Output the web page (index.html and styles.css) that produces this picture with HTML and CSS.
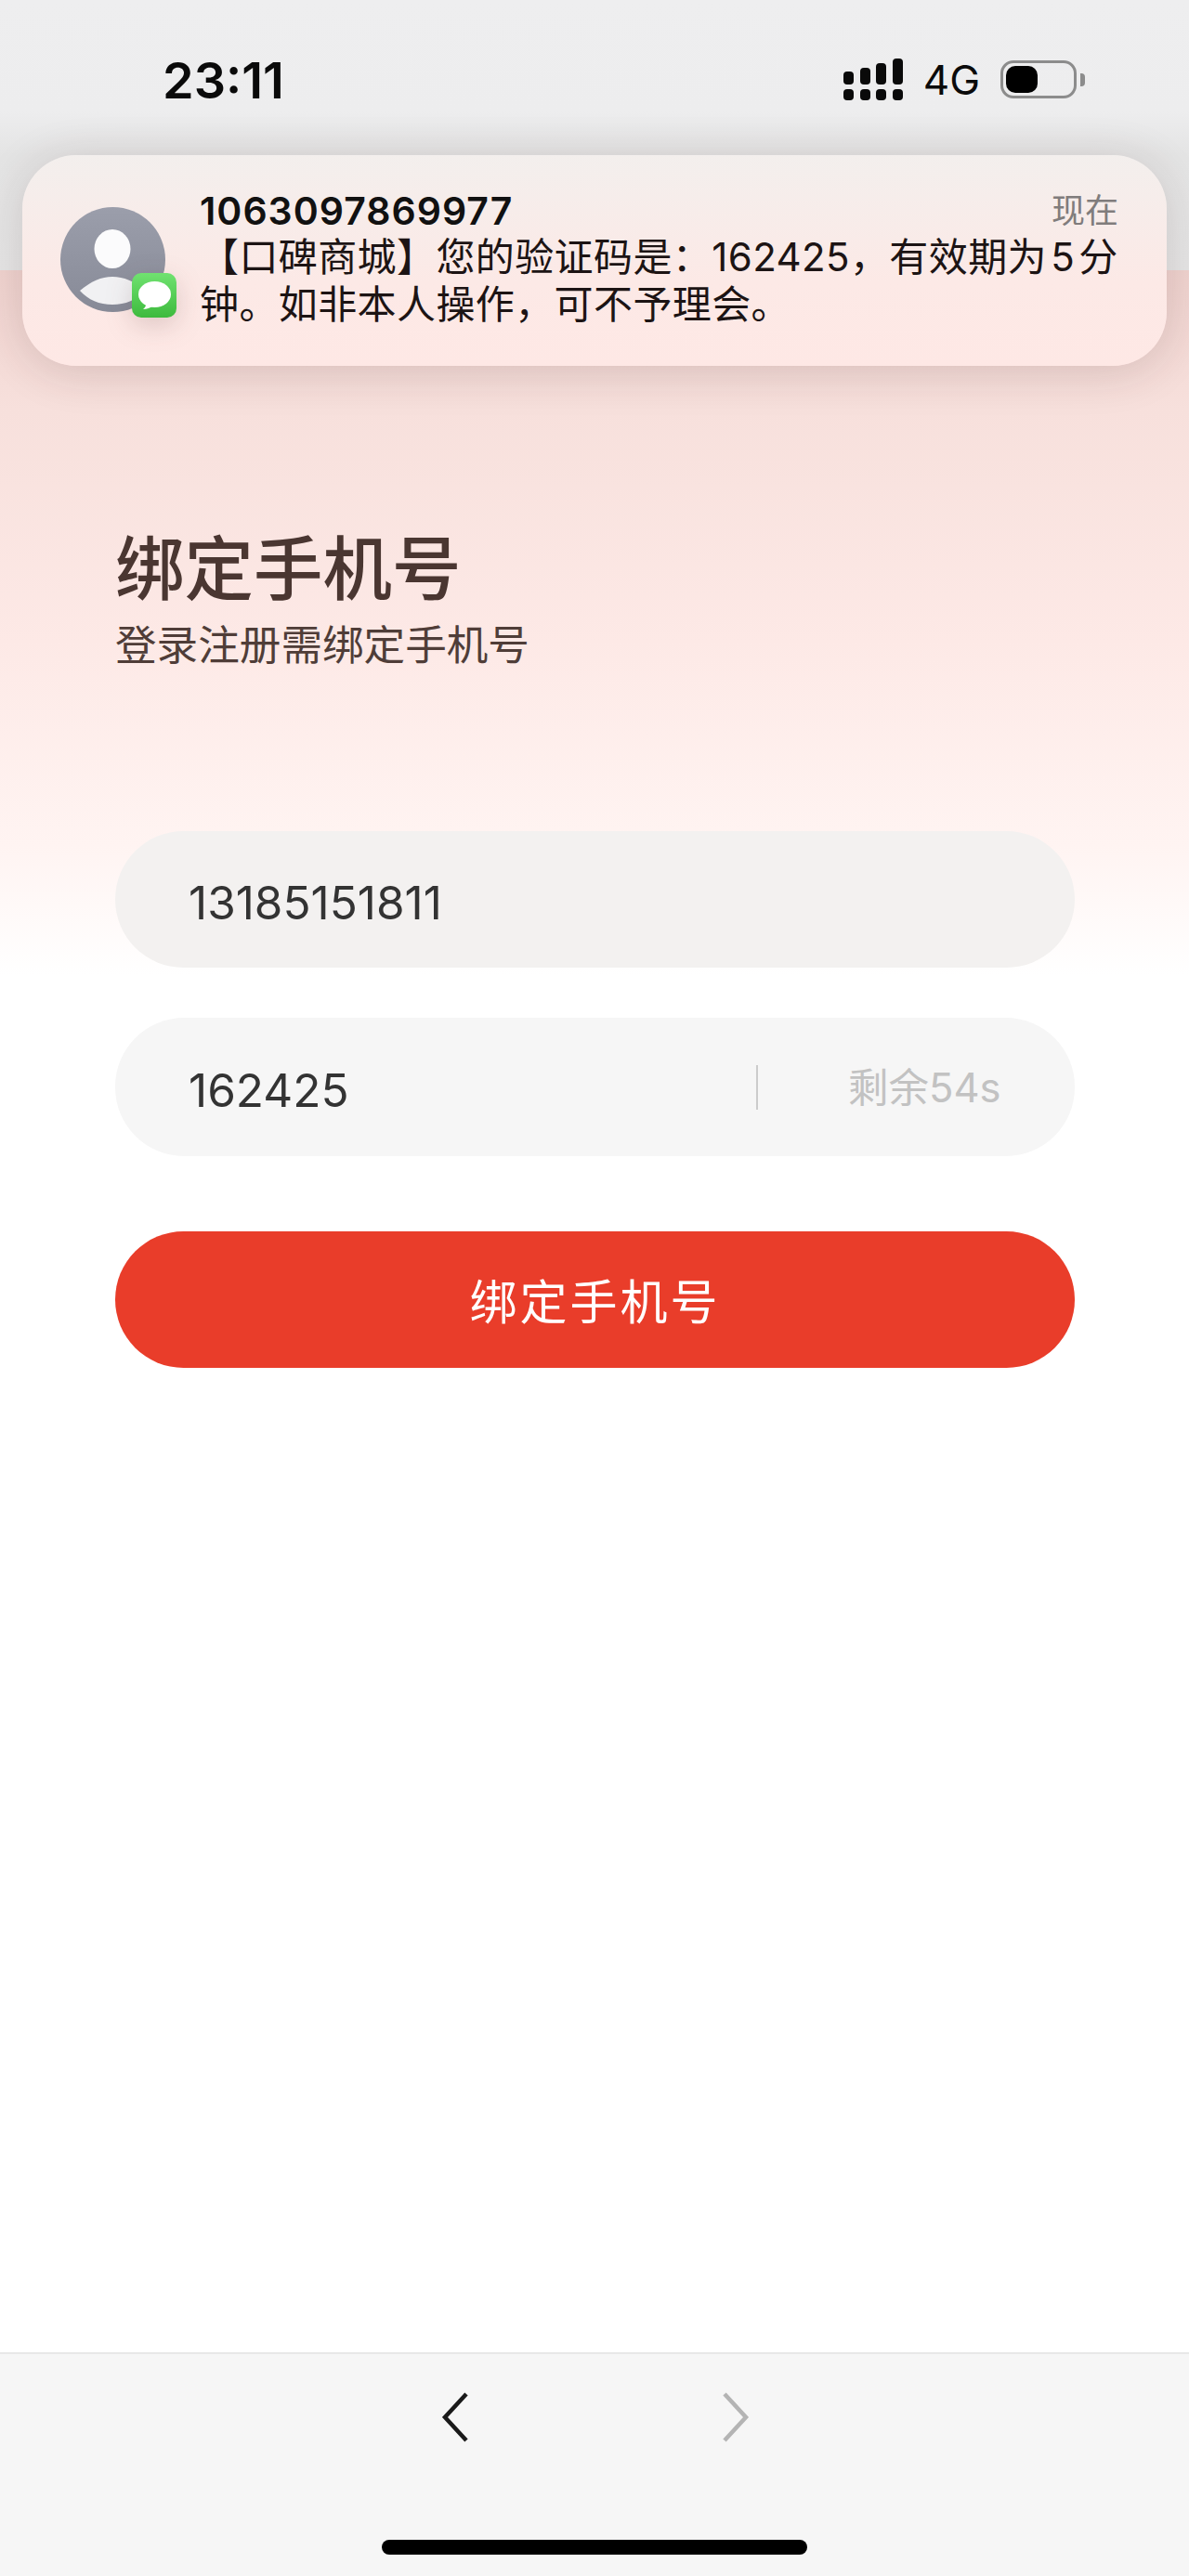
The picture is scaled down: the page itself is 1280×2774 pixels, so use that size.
FILE: index.html
```html
<!DOCTYPE html>
<html lang="zh-CN">

<head>
  <meta charset="UTF-8" />
  <meta name="viewport" content="width=device-width, initial-scale=1.0" />
  <title>绑定手机号</title>
  <link rel="stylesheet" href="styles.css">
</head>

<body>
  <div class="status-bar">
    <span class="status-time">23:11</span>
    <div class="status-right">
      <svg class="signal" width="64" height="45" viewBox="0 0 64 45">
        <rect x="0" y="14" width="11" height="14" rx="4" />
        <rect x="18" y="10" width="11" height="18" rx="4" />
        <rect x="35" y="5" width="11" height="23" rx="4" />
        <rect x="53" y="0" width="11" height="28" rx="4" />
        <rect x="0" y="33" width="11" height="12" rx="4" />
        <rect x="18" y="33" width="11" height="12" rx="4" />
        <rect x="35" y="33" width="11" height="12" rx="4" />
        <rect x="53" y="33" width="11" height="12" rx="4" />
      </svg>
      <span class="network">4G</span>
      <div class="battery">
        <div class="battery-level"></div>
      </div>
    </div>
  </div>

  <!-- notificacao por cima da pagina -->
  <div class="notice">
    <div class="notice-icon">
      <svg class="avatar" width="113" height="113" viewBox="0 0 113 113">
        <defs>
          <linearGradient id="avatarBg" x1="0" y1="0" x2="0" y2="1">
            <stop offset="0" stop-color="#9b9eab" />
            <stop offset="1" stop-color="#878a97" />
          </linearGradient>
        </defs>
        <circle cx="56.5" cy="56.5" r="56.5" fill="url(#avatarBg)" />
        <ellipse cx="56" cy="45" rx="19.5" ry="21" fill="#fbfbfc" />
        <path d="M21 90C33 80 44 75 56 75C68 75 80 80 91 90C82 100 70 105 56 105C42 105 30 100 21 90Z" fill="#f1f1f3" />
      </svg>
      <svg class="badge" width="48" height="48" viewBox="0 0 48 48">
        <defs>
          <linearGradient id="badgeBg" x1="0" y1="0" x2="0" y2="1">
            <stop offset="0" stop-color="#70e270" />
            <stop offset="1" stop-color="#3dba3d" />
          </linearGradient>
        </defs>
        <rect width="48" height="48" rx="10" fill="url(#badgeBg)" />
        <ellipse cx="24.5" cy="23" rx="17.5" ry="14" fill="#fff" />
        <path d="M16 32C15.5 35 14 37.5 12 39C16 39 20 37.5 23 35Z" fill="#fff" />
      </svg>
    </div>
    <div class="notice-body">
      <div class="notice-head">
        <span class="notice-from">1063097869977</span>
        <span class="notice-time">现在</span>
      </div>
      <p class="notice-text">【口碑商城】您的验证码是：162425，有效期为&#8202;5&#8202;分<br>钟。如非本人操作，可不予理会。</p>
    </div>
  </div>

  <div class="page">
    <h1 class="titulo">绑定手机号</h1>
    <p class="subtitulo">登录注册需绑定手机号</p>

    <div class="form">
      <div class="field field-phone">13185151811</div>
      <div class="field field-code">
        <span>162425</span>
        <span class="countdown">剩余54s</span>
      </div>
      <div class="submit">绑定手机号</div>
    </div>
  </div>

  <div class="toolbar">
    <div class="toolbar-arrows">
      <svg width="30" height="54" viewBox="0 0 30 54" fill="none" stroke="#1a1a1a" stroke-width="4.5">
        <path d="M27 2L4 27L27 52" />
      </svg>
      <svg width="30" height="54" viewBox="0 0 30 54" fill="none" stroke="#b4b4b4" stroke-width="4.5">
        <path d="M3 2L26 27L3 52" />
      </svg>
    </div>
    <div class="home-bar"></div>
  </div>
</body>

</html>
```

FILE: styles.css
```css
* {
  box-sizing: border-box;
  margin: 0;
  padding: 0;
}

body {
  display: flex;
  flex-direction: column;
  width: 100%;
  height: 100vh;
  position: relative;
  background: #ffffff;
  font-family: Inter, "Noto Sans CJK SC", sans-serif;
  overflow: hidden;
}

/* Barra de status */
.status-bar {
  display: flex;
  justify-content: space-between;
  align-items: flex-start;
  height: 291px;
  padding: 63px 121px 0 175px;
  background: linear-gradient(180deg, #eeeeef 0, #ededee 120px, #e4e4e4 167px, #e6e6e6 291px);
}

.status-time {
  font-size: 54px;
  font-weight: 600;
  line-height: 47px;
  color: #0a0a0a;
}

.status-right {
  display: flex;
  align-items: flex-start;
}

.signal {
  fill: #0a0a0a;
}

.network {
  margin: 1px 0 0 22px;
  font-size: 44px;
  font-weight: 400;
  line-height: 44px;
  color: #0a0a0a;
}

.battery {
  position: relative;
  width: 82px;
  height: 41px;
  margin: 2px 0 0 22px;
  padding: 3px;
  border: 3px solid #8c8c8c;
  border-radius: 14px;
}

.battery::after {
  content: "";
  position: absolute;
  top: 11px;
  right: -12px;
  width: 5px;
  height: 14px;
  border-radius: 0 4px 4px 0;
  background: #8c8c8c;
}

.battery-level {
  width: 34px;
  height: 29px;
  border-radius: 10px;
  background: #000000;
}

/* Notificacao */
.notice {
  display: flex;
  position: absolute;
  top: 167px;
  left: 24px;
  width: 1232px;
  height: 227px;
  padding: 39px 40px 0 41px;
  border-radius: 58px;
  background: linear-gradient(180deg, #f3efed 0, #fce9e6 60%, #fee8e5 100%);
  box-shadow: 0 6px 50px rgba(60, 30, 30, 0.16);
}

.notice-icon {
  position: relative;
  flex: none;
  width: 113px;
  height: 113px;
  margin-top: 17px;
}

.avatar {
  display: block;
}

.badge {
  position: absolute;
  left: 77px;
  top: 71px;
  filter: drop-shadow(0 8px 14px rgba(80, 40, 40, 0.18));
}

.notice-body {
  flex: 1;
  margin-left: 37px;
}

.notice-head {
  display: flex;
  justify-content: space-between;
  align-items: center;
  height: 42px;
  padding-right: 12px;
}

.notice-from {
  font-size: 41px;
  font-weight: 600;
  line-height: 42px;
  letter-spacing: 1px;
  color: #111111;
}

.notice-time {
  font-size: 36px;
  line-height: 42px;
  color: #807c7c;
}

.notice-text {
  margin-top: 3px;
  font-size: 42px;
  line-height: 51px;
  letter-spacing: 0.4px;
  white-space: nowrap;
  color: #1c1414;
}

/* Conteudo */
.page {
  flex: 1;
  padding: 276px 123px 0 124px;
  background: linear-gradient(180deg, #f0d3cf 0, #f7e0dc 150px, #fde9e6 400px, #fff4f2 620px, #ffffff 760px);
}

.titulo {
  font-size: 74.5px;
  font-weight: 500;
  line-height: 92px;
  color: #4a3631;
}

.subtitulo {
  margin-top: 8px;
  font-size: 44.6px;
  line-height: 56px;
  color: #4f3d38;
}

.form {
  display: flex;
  flex-direction: column;
  margin-top: 172px;
}

.field {
  display: flex;
  justify-content: space-between;
  align-items: center;
  height: 147px;
  padding: 6px 80px 0 79px;
  border-radius: 74px;
  font-size: 49.5px;
  color: #333333;
}

.field-phone {
  background: #f3f1f0;
}

.field-code {
  height: 149px;
  margin-top: 54px;
  background: #f6f6f6;
}

.countdown {
  width: 263px;
  height: 48px;
  margin-top: -6px;
  padding-left: 97px;
  border-left: 2px solid #cccccc;
  font-size: 43.5px;
  line-height: 48px;
  color: #c2c2c2;
  white-space: nowrap;
}

.submit {
  height: 147px;
  margin-top: 81px;
  padding-top: 3px;
  border-radius: 74px;
  background: #e93d2a;
  font-size: 51px;
  line-height: 147px;
  letter-spacing: 3px;
  text-align: center;
  color: #ffffff;
}

/* Barra inferior */
.toolbar {
  display: flex;
  flex-direction: column;
  align-items: center;
  flex: none;
  height: 241px;
  border-top: 2px solid #e8e8e8;
  background: #f6f6f6;
}

.toolbar-arrows {
  display: flex;
  justify-content: space-between;
  width: 332px;
  margin: 41px 0 0 2px;
}

.home-bar {
  width: 458px;
  height: 16px;
  margin-top: 105px;
  border-radius: 8px;
  background: #000000;
}
```
